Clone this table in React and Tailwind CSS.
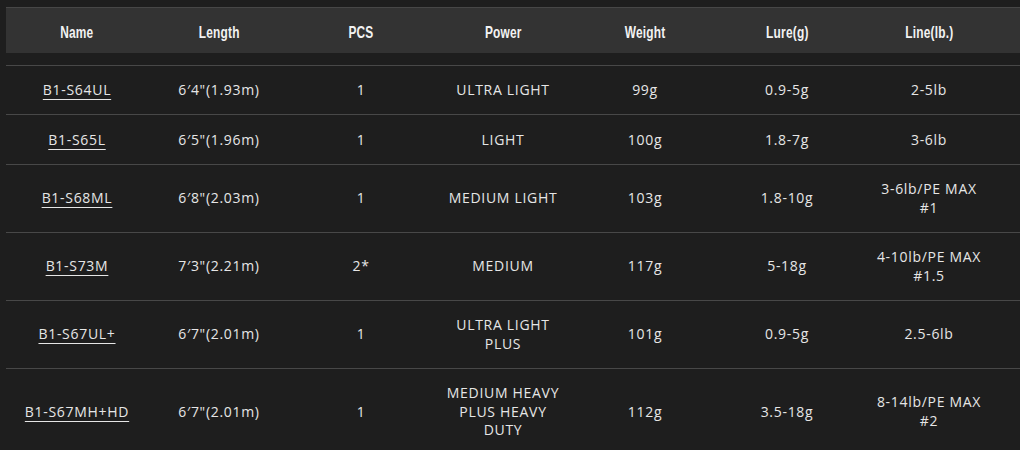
import React from 'react';

const headers = ['Name', 'Length', 'PCS', 'Power', 'Weight', 'Lure(g)', 'Line(lb.)'];

const rows = [
  { name: 'B1-S64UL', length: '6′4"(1.93m)', pcs: '1', power: ['ULTRA LIGHT'], weight: '99g', lure: '0.9-5g', line: ['2-5lb'] },
  { name: 'B1-S65L', length: '6′5"(1.96m)', pcs: '1', power: ['LIGHT'], weight: '100g', lure: '1.8-7g', line: ['3-6lb'] },
  { name: 'B1-S68ML', length: '6′8"(2.03m)', pcs: '1', power: ['MEDIUM LIGHT'], weight: '103g', lure: '1.8-10g', line: ['3-6lb/PE MAX', '#1'] },
  { name: 'B1-S73M', length: '7′3"(2.21m)', pcs: '2*', power: ['MEDIUM'], weight: '117g', lure: '5-18g', line: ['4-10lb/PE MAX', '#1.5'] },
  { name: 'B1-S67UL+', length: '6′7"(2.01m)', pcs: '1', power: ['ULTRA LIGHT', 'PLUS'], weight: '101g', lure: '0.9-5g', line: ['2.5-6lb'] },
  { name: 'B1-S67MH+HD', length: '6′7"(2.01m)', pcs: '1', power: ['MEDIUM HEAVY', 'PLUS HEAVY', 'DUTY'], weight: '112g', lure: '3.5-18g', line: ['8-14lb/PE MAX', '#2'] },
];

function Lines({ items }) {
  return items.map((t, i) => (
    <span key={i} className="block">
      {t}
    </span>
  ));
}

export default function App() {
  return (
    <div className="min-h-[450px] w-[1020px] overflow-hidden bg-[#1e1e1e] pt-[7px]">
      {/* header band */}
      <div className="ml-[6px] h-[46px] border-t border-[#474747] bg-[#333333]">
        <div className="grid h-full grid-cols-[repeat(7,142px)] items-center pt-[5px]">
          {headers.map((h) => (
            <div key={h} className="text-center">
              {/* narrow display face squeezed from Liberation Sans */}
              <span
                className="inline-block scale-x-[0.7] text-[17px] font-bold tracking-[0.3px] text-[#f2f2f2]"
                style={{ fontFamily: '"Liberation Sans", sans-serif' }}
              >
                {h}
              </span>
            </div>
          ))}
        </div>
      </div>

      <div className="mt-[11.5px] ml-[6px]" style={{ fontFamily: '"Open Sans", "Noto Sans", sans-serif' }}>
        {rows.map((r) => (
          <div
            key={r.name}
            className="grid grid-cols-[repeat(7,142px)] items-center border-t border-[#484848] pt-[15.5px] pb-[14.5px] text-center text-[14px] leading-[18.5px] tracking-[0.7px] text-[#e6e6e6]"
          >
            <div>
              <span className="underline underline-offset-[4px]">{r.name}</span>
            </div>
            <div>{r.length}</div>
            <div>{r.pcs}</div>
            <div>
              <Lines items={r.power} />
            </div>
            <div>{r.weight}</div>
            <div>{r.lure}</div>
            <div>
              <Lines items={r.line} />
            </div>
          </div>
        ))}
      </div>
    </div>
  );
}
